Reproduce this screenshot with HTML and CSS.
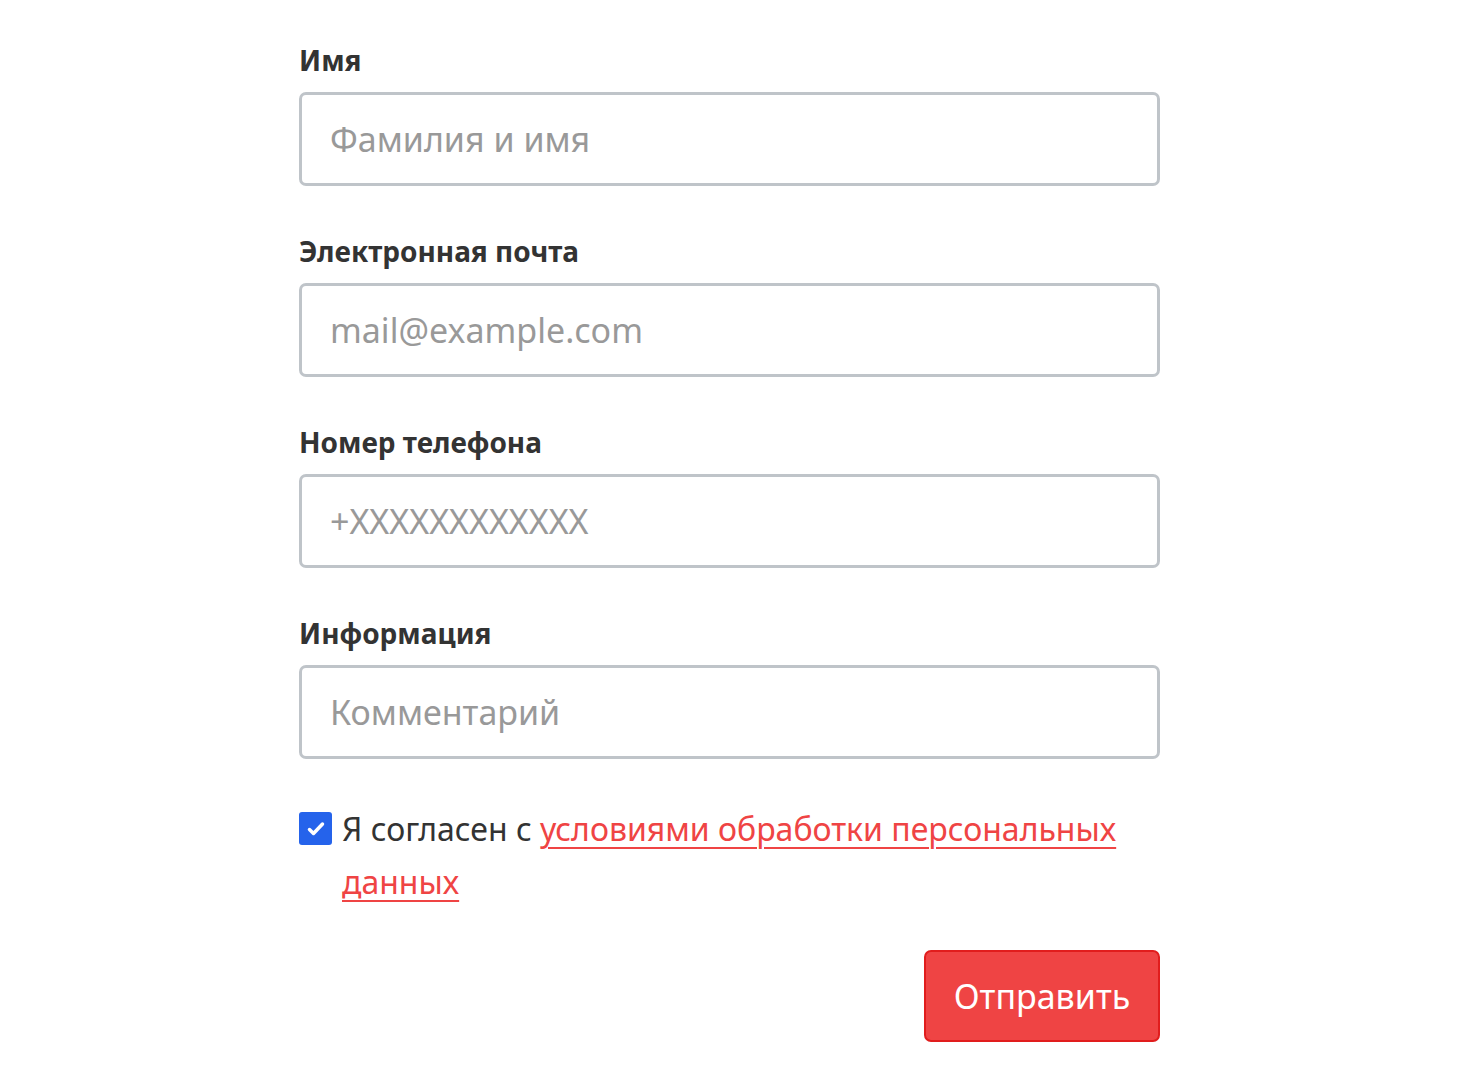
FILE: index.html
```html
<!DOCTYPE html>
<html lang="ru">
<head>
    <meta charset="UTF-8">
    <meta name="viewport" content="width=device-width, initial-scale=1.0">
    <title>Обратная связь</title>
    <link rel="stylesheet" href="styles.css">
</head>
<body>
    <form class="feedback-form" onsubmit="return false;">
        <div class="field">
            <label for="name">Имя</label>
            <input type="text" id="name" placeholder="Фамилия и имя">
        </div>
        <div class="field">
            <label for="email">Электронная почта</label>
            <input type="email" id="email" placeholder="mail@example.com">
        </div>
        <div class="field">
            <label for="phone">Номер телефона</label>
            <input type="tel" id="phone" placeholder="+XXXXXXXXXXXX">
        </div>
        <div class="field">
            <label for="info">Информация</label>
            <input type="text" id="info" placeholder="Комментарий">
        </div>

        <div class="agree">
            <span class="checkbox">
                <svg width="24" height="24" viewBox="0 0 24 24"><path d="M5.5 12.5l4 4 9-9.5" fill="none" stroke="#fff" stroke-width="3.5" stroke-linecap="round" stroke-linejoin="round"/></svg>
            </span>
            <p>Я согласен с <a href="#">условиями обработки персональных данных</a></p>
        </div>

        <div class="actions">
            <button type="submit" class="submit-btn">Отправить</button>
        </div>
    </form>
</body>
</html>
```

FILE: styles.css
```css
body {
    margin: 0;
    font-family: "Noto Sans", "Open Sans", sans-serif;
    color: #333;
    background: #fff;
}
.feedback-form {
    width: 861px;
    margin-left: 299px;
    padding-top: 39px;
}
.field {
    margin-bottom: 44px;
}
.field label {
    display: block;
    font-size: 28px;
    font-weight: bold;
    line-height: 42px;
    margin-bottom: 11px;
    color: #333;
}
.field input {
    display: block;
    box-sizing: border-box;
    width: 100%;
    height: 94px;
    padding: 0 28px;
    border: 3px solid #bfc4c9;
    border-radius: 7px;
    font-family: inherit;
    font-size: 34px;
    color: #333;
    outline: none;
}
.field input::placeholder {
    color: #999;
}
.agree {
    display: flex;
    align-items: flex-start;
    gap: 10px;
    margin-top: -1px;
}
.checkbox {
    flex: none;
    width: 33px;
    height: 33px;
    margin-top: 10px;
    background: #2563eb;
    border-radius: 3px;
    display: flex;
    align-items: center;
    justify-content: center;
}
.agree p {
    margin: 0;
    font-size: 32px;
    line-height: 53px;
}
.agree a {
    color: #ef4444;
    text-decoration: underline;
    text-decoration-thickness: 2px;
    text-underline-offset: 6px;
}
.actions {
    display: flex;
    justify-content: flex-end;
    margin-top: 42px;
}
.submit-btn {
    width: 236px;
    height: 92px;
    background-color: #ef4444;
    border: 2px solid #e11d1d;
    border-radius: 7px;
    color: #fff;
    font-family: inherit;
    font-size: 34px;
    cursor: pointer;
}
.submit-btn:hover {
    background-color: #dc2626;
}
```
